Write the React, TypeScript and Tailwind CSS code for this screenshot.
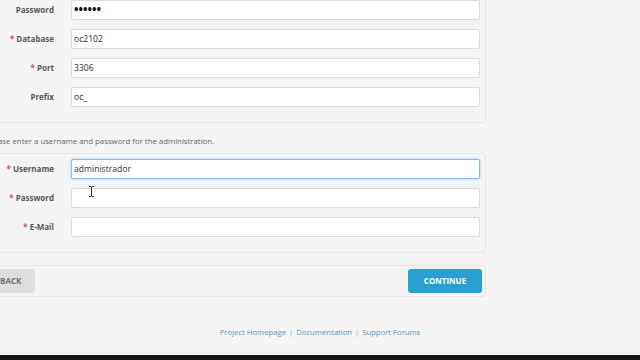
import React from "react";

type Field = { label: string; value?: string; required?: boolean; focused?: boolean; secret?: boolean };

const dbFields: Field[] = [
  { label: "Username", value: "root", required: true },
  { label: "Password", value: "••••••", secret: true },
  { label: "Database", value: "oc2102", required: true },
  { label: "Port", value: "3306", required: true },
  { label: "Prefix", value: "oc_" },
];

const adminFields: Field[] = [
  { label: "Username", value: "administrador", required: true, focused: true },
  { label: "Password", value: "", required: true },
  { label: "E-Mail", value: "", required: true },
];

const FieldRow: React.FC<{ field: Field }> = ({ field }) => (
  <div className="flex items-center h-[20px]">
    <label className="w-[57px] shrink-0 text-right text-[8px] font-bold text-[#585858] leading-none whitespace-nowrap">
      {field.required && <span className="text-[#d9534f] mr-[2px]">*</span>}
      {field.label}
    </label>
    <div
      className={`ml-[17px] flex-1 h-[20px] flex items-center bg-white rounded-[2px] px-[2px] border ${
        field.focused
          ? "border-[#86bde3] shadow-[0_0_3px_rgba(102,175,233,0.55)]"
          : "border-[#dcdcdc]"
      }`}
    >
      <span
        className={
          field.secret
            ? "text-[12px] font-bold text-[#111] leading-none"
            : "text-[8.6px] text-[#333] leading-none"
        }
      >
        {field.value}
      </span>
    </div>
  </div>
);

export default function App() {
  return (
    <div
      className="relative w-[640px] h-[360px] overflow-hidden bg-[#f4f4f4] flex flex-col"
      style={{ fontFamily: '"Open Sans", "Liberation Sans", sans-serif' }}
    >
      <div className="ml-[-14px] w-[500px] mt-[-40px] flex flex-col">
        <div className="border border-[#e4e4e4] rounded-[3px] pl-[10px] pr-[5px] pt-[10px] pb-[15px] flex flex-col gap-[9px]">
          {dbFields.map((f) => (
            <FieldRow key={f.label} field={f} />
          ))}
        </div>

        <p className="mt-[12px] mb-[6px] text-[7.8px] leading-[12px] text-[#666] pl-[1px]">
          Please enter a username and password for the administration.
        </p>

        <div className="border border-[#e4e4e4] rounded-[3px] pl-[10px] pr-[5px] pt-[5px] pb-[15px] flex flex-col gap-[9px]">
          {adminFields.map((f) => (
            <FieldRow key={f.label} field={f} />
          ))}
        </div>

        <div className="mt-[12px] border border-[#e4e4e4] rounded-[3px] pl-[4px] pr-[3px] py-[3px] flex items-center justify-between">
          <button className="w-[44px] h-[24px] rounded-[3px] bg-[#dedede] text-[8px] font-bold text-[#707070] flex items-center pl-[9px]">
            BACK
          </button>
          <button className="w-[74px] h-[24px] rounded-[3px] bg-[#2a9fd0] text-[8px] font-bold text-white flex items-center justify-center">
            CONTINUE
          </button>
        </div>
      </div>

      <div className="mt-[29px] flex justify-center items-center gap-[3px] text-[7.7px] leading-[12px] text-[#5a93c2]">
        <span>Project Homepage</span>
        <span className="text-[#aaa]">|</span>
        <span>Documentation</span>
        <span className="text-[#aaa]">|</span>
        <span>Support Forums</span>
      </div>

      <div className="mt-auto h-[5px] bg-[#151515]" />

      <svg className="absolute left-[88px] top-[186px]" width="7" height="11" viewBox="0 0 7 11">
        <path d="M1 0.5h2l0.5 0.5 0.5-0.5h2M3.5 1v9M1 10.5h2l0.5-0.5 0.5 0.5h2" stroke="#333" strokeWidth="1" fill="none" />
      </svg>
    </div>
  );
}
